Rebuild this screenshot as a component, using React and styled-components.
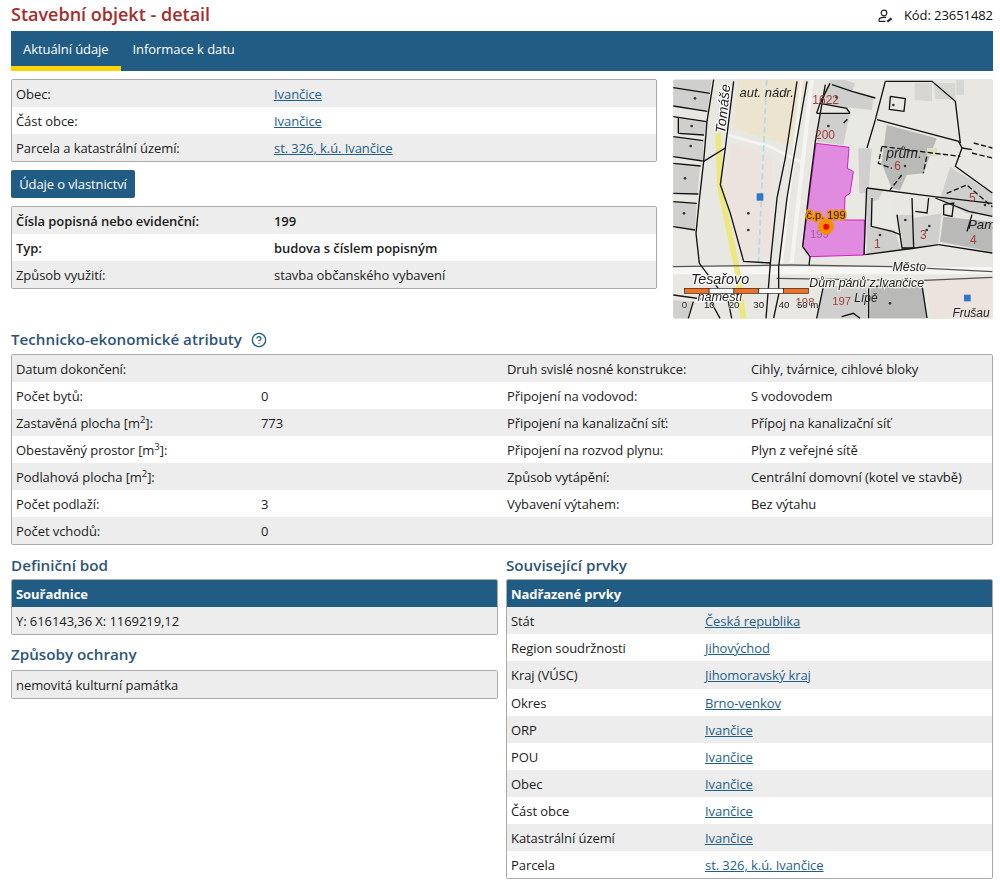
import React from 'react';
import styled, { createGlobalStyle } from 'styled-components';
import { CircleHelp } from 'lucide-react';

const NAVY = '#205c84';

const GlobalStyle = createGlobalStyle`
  html, body {
    margin: 0;
    padding: 0;
    background: #fff;
    color: #1c1c1c;
    font-family: "Open Sans", "Noto Sans", sans-serif;
    font-size: 13px;
    letter-spacing: -0.07px;
    line-height: 27px;
  }
`;

const Page = styled.div`
  padding: 0 7px 0 11px;
  width: 982px;
`;

const TitleBar = styled.header`
  display: flex;
  justify-content: space-between;
  align-items: center;
  height: 31px;
`;

const Title = styled.h1`
  margin: 0 0 2px;
  font-size: 18px;
  font-weight: 600;
  color: #a52c2c;
  line-height: 29px;
  letter-spacing: 0;
`;

const Code = styled.div`
  display: flex;
  align-items: center;
  gap: 11px;
  color: #111;
`;

const Nav = styled.nav`
  display: flex;
  height: 40px;
  background: ${NAVY};
  margin-bottom: 8px;
`;

const Tab = styled.a`
  box-sizing: border-box;
  height: 40px;
  padding: 0 12px;
  color: #fff;
  line-height: 36px;
  border-bottom: 5px solid ${(p) => (p.$active ? '#ffd200' : 'transparent')};
`;

const Top = styled.section`
  display: grid;
  grid-template-columns: 646px 320px;
  justify-content: space-between;
  height: 240px;
`;

const Panel = styled.div`
  border: 1px solid #aaa;
  border-radius: 2px;
  overflow: hidden;
`;

const Row = styled.div`
  display: grid;
  grid-template-columns: ${(p) => p.$cols};
  height: ${(p) => (p.$tall ? 28 : 27)}px;
  line-height: 29px;
  padding-left: 4px;
  background: #fff;
  white-space: nowrap;
  &:nth-child(odd) { background: #ededed; }
  font-weight: ${(p) => (p.$bold ? 600 : 400)};
`;

const HeadRow = styled.div`
  height: 27px;
  line-height: 29px;
  padding-left: 4px;
  background: ${NAVY};
  color: #fff;
  font-weight: 700;
`;

const HeadedBody = styled.div`
  ${Row}:nth-child(odd) { background: #ededed; }
  ${Row}:nth-child(even) { background: #fff; }
`;

const Link = styled.a`
  color: #1f5f8b;
  text-decoration: underline;
`;

const Sup = styled.sup`
  font-size: 9.5px;
  line-height: 0;
`;

const Button = styled.button`
  display: block;
  height: 28px;
  width: 124px;
  margin: 8px 0;
  padding: 0;
  border: 0;
  border-radius: 2px;
  background: ${NAVY};
  color: #fff;
  font: inherit;
  letter-spacing: -0.1px;
`;

const MapFrame = styled.div`
  width: 320px;
  height: 240px;
  overflow: hidden;
  border-radius: 2px;
  svg { display: block; }
`;

const Heading = styled.h2`
  box-sizing: border-box;
  display: flex;
  align-items: center;
  gap: 9px;
  margin: 0;
  height: ${(p) => p.$h || 24}px;
  padding-bottom: ${(p) => p.$pb || 5}px;
  font-size: 15.2px;
  font-weight: 600;
  letter-spacing: 0;
  color: #2d5478;
  svg { color: ${NAVY}; }
`;

const TechSection = styled.section`
  margin-top: 11px;
`;

const Columns = styled.section`
  display: grid;
  grid-template-columns: 487px 487px;
  justify-content: space-between;
  margin-top: 8px;
`;

const Column = styled.div`
  display: flex;
  flex-direction: column;
`;

const SubHeading = styled(Heading)`
  margin-top: 8px;
`;

function OwnerIcon() {
  return (
    <svg width="15" height="14" viewBox="0 0 15 14" fill="none" stroke="#222" strokeWidth="1.2">
      <circle cx="6" cy="4" r="2.8" />
      <path d="M1 12.4 V11 C1 9 3 8.4 6 8.4 H8 M1 12.4 H7.5" />
      <path d="M9.3 12.6 L13.6 9.4" strokeWidth="2" />
    </svg>
  );
}

const LIGHT_PATCHES = [
  '551,369 566,354 640,335 646,364 631,439 561,434 551,404',
  '640,600 700,600 700,685 636,680',
  '560,590 612,590 612,655 553,655',
];
const PALE_BUILDINGS = [
  '764,249 816,249 816,304 764,300',
  '821,249 886,249 886,299 826,296',
  '889,240 912,240 912,285 889,285',
];
const BUILDINGS = [
  '40,240 155,240 142,332 40,318',
  '55,350 140,365 132,405 55,400',
  '40,410 130,422 128,483 40,470',
  '40,490 120,500 112,580 40,580',
  '40,605 110,610 105,690 40,680',
  '40,900 100,905 85,955 40,955',
  '510,240 555,240 585,250 560,325 480,310',
  '570,270 640,292 636,330 560,322',
  '480,340 570,340 550,435 470,425',
  '595,445 635,445 625,580 598,580',
  '620,565 670,570 655,600 635,605 636,680 705,690 722,750 620,765',
  '715,645 760,645 760,750 730,750',
  '760,655 845,640 835,730 760,745',
  '870,500 997,580 997,650 920,640 840,600',
  '490,860 620,855 628,955 470,955',
];
const BUILDINGS_DARK = [
  '680,375 830,415 790,520 740,525 720,570 695,565 665,490',
  '850,650 997,665 997,755 840,725',
  '632,860 786,856 801,955 630,955',
];
const LINES = [
  '161,239 141,364 131,484 118,600 108,700 118,790 205,905 215,955',
  '221,244 196,444 181,554 211,640 251,784 331,789',
  '196,444 131,484',
  '40,263 150,280',
  '40,318 142,334',
  '40,350 140,365',
  '55,400 132,405',
  '55,352 55,400',
  '40,410 130,422',
  '40,470 128,483',
  '40,490 122,498',
  '40,580 115,582',
  '40,605 110,610',
  '40,680 105,690',
  '411,244 376,474 351,594 331,790 318,955',
  '496,254 466,424 446,584 428,740 450,770 447,795',
  '441,244 401,474 381,594 356,800 356,884 341,954',
  '516,254 576,274 646,294',
  '676,244 646,359 621,444',
  '651,359 896,424 906,444',
  '676,244 816,244 886,304 901,429',
  '906,444 886,499 997,579',
  '906,444 936,449',
  '510,250 480,310 470,340',
  '480,310 560,325 570,340',
  '470,340 570,340',
  '621,564 816,589 997,610',
  '620,565 612,765',
  '636,594 634,679 696,694 721,704',
  '711,644 726,744 761,744 756,594',
  '806,594 801,639 766,634',
  '826,594 926,634 997,649',
  '936,644 921,694',
  '836,734 997,759',
  '616,764 766,744 836,734',
  '851,614 881,609 876,649 851,644 851,614',
  '691,289 736,296 732,334 688,328 691,289',
  '626,859 626,955',
  '631,859 786,856 801,954',
  '490,860 470,955',
  '40,885 150,900 180,955',
  '100,905 85,955',
  '545,950 580,940 600,955',
];
const ROAD_LINES = [
  '390,795 700,800 997,815',
  '350,835 776,842 997,832',
  '40,800 390,795',
];
const DASHED = [
  '666,439 816,459 901,469',
  '666,439 655,490 695,505',
  '800,470 790,520',
  '941,429 997,444',
  '936,459 997,474',
  '860,580 920,555 997,620',
  '725,525 690,570',
  '551,369 566,354',
];
const RED_LABELS = [
  ['1622', 497, 312, 36],
  ['200', 495, 417, 36],
  ['6', 713, 510, 36],
  ['5', 937, 607, 36],
  ['4', 940, 732, 36],
  ['3', 790, 717, 36],
  ['1', 652, 745, 36],
  ['198', 435, 917, 34],
  ['197', 545, 915, 34],
];
const DOTS = [
  [105, 295], [95, 378], [92, 438], [75, 535], [72, 640], [530, 292], [505, 378],
  [735, 498], [808, 678], [736, 660], [975, 615], [660, 705], [800, 690], [700, 315],
  [690, 910], [265, 640], [265, 690],
];
const SCALE = [0, 1, 2, 3, 4];
const SCALE_TICKS = [['0', 73], ['10', 148], ['20', 222], ['30', 296], ['40', 372], ['50 m', 443]];

const ItalicLabel = styled.text`
  font-family: "Liberation Sans", sans-serif;
  font-style: italic;
  fill: #222;
  text-anchor: middle;
  stroke: ${(p) => p.$halo || 'none'};
  stroke-width: 7px;
  paint-order: stroke;
`;

const MapText = styled.text`
  font-family: "Liberation Sans", sans-serif;
  text-anchor: middle;
  letter-spacing: 0;
`;

function CadastreMap() {
  // souradnice ve 3x mrizce podle vyrezu
  return (
    <MapFrame>
      <svg width="320" height="240" viewBox="39 237 960 720" style={{ filter: 'blur(0.4px)' }}>
        <rect x="39" y="237" width="960" height="720" fill="#e8e7e1" />
        <polygon points="235,240 440,240 395,440 220,385" fill="#ece4cf" />
        <polygon points="215,430 335,470 330,770 245,770 190,560" fill="#ece2de" />
        <polygon points="800,840 997,830 997,955 810,955" fill="#ece2de" />
        <path d="M205 405 L330 440 L430 490" fill="none" stroke="#f4f4f2" strokeWidth="9" />
        <path d="M455 240 L395 790" fill="none" stroke="#f4f4f2" strokeWidth="12" />
        <path d="M425 240 L365 790" fill="none" stroke="#f4f4f2" strokeWidth="8" />
        <path d="M40 812 L997 812" fill="none" stroke="#f6f6f4" strokeWidth="22" />
        <path d="M175 400 L180 560 L230 800 L250 955" fill="none" stroke="#ece77f" strokeWidth="17" />
        <path d="M320 240 L295 800" fill="none" stroke="#b5d8e6" strokeWidth="5" strokeDasharray="18 10" />
        {LIGHT_PATCHES.map((p) => <polygon key={p} points={p} fill="#e9e9e3" />)}
        {PALE_BUILDINGS.map((p) => <polygon key={p} points={p} fill="#d6d6d3" />)}
        {BUILDINGS.map((p) => <polygon key={p} points={p} fill="#cfcfcd" />)}
        {BUILDINGS_DARK.map((p) => <polygon key={p} points={p} fill="#b9b9b7" />)}
        <rect x="801" y="444" width="30" height="24" fill="#e0dcc0" />
        <polygon
          points="468,430 567,442 562,505 580,515 570,580 555,590 553,660 613,660 613,765 450,770 428,740"
          fill="#e18be0"
          stroke="#cf22c8"
          strokeWidth="3"
        />
        {ROAD_LINES.map((p) => <polyline key={p} points={p} fill="none" stroke="#555" strokeWidth="4" />)}
        {LINES.map((p) => <polyline key={p} points={p} fill="none" stroke="#111" strokeWidth="4" />)}
        {DASHED.map((p) => <polyline key={p} points={p} fill="none" stroke="#111" strokeWidth="4" strokeDasharray="16 7" />)}
        {DOTS.map(([x, y]) => <circle key={`${x}-${y}`} cx={x} cy={y} r="4" fill="#333" />)}
        <rect x="290" y="580" width="20" height="22" fill="#2f78c4" />
        <rect x="912" y="884" width="20" height="20" fill="#2f78c4" />
        <MapText x="478" y="715" fontSize="34" fill="#a15fa0">199</MapText>
        {RED_LABELS.map(([t, x, y, s]) => (
          <MapText key={t} x={x} y={y} fontSize={s} fill="#a0403f">{t}</MapText>
        ))}
        <ItalicLabel x="320" y="290" fontSize="39">aut. nádr.</ItalicLabel>
        <ItalicLabel x="732" y="474" fontSize="42">prům.</ItalicLabel>
        <ItalicLabel x="965" y="688" fontSize="40">Pam</ItalicLabel>
        <ItalicLabel x="748" y="813" fontSize="37" $halo="#f2f2f0">Město</ItalicLabel>
        <ItalicLabel x="620" y="861" fontSize="37" $halo="#f2f2f0">Dům pánů z Ivančice</ItalicLabel>
        <ItalicLabel x="618" y="905" fontSize="36">Lípě</ItalicLabel>
        <ItalicLabel x="933" y="952" fontSize="36">Frušau</ItalicLabel>
        <ItalicLabel x="180" y="853" fontSize="43" $halo="#fff">Tesařovo</ItalicLabel>
        <ItalicLabel x="180" y="903" fontSize="38" $halo="#fff">náměstí</ItalicLabel>
        <ItalicLabel x="0" y="0" fontSize="42" $halo="#fff" transform="translate(203 328) rotate(-84)">Tomáše</ItalicLabel>
        {SCALE.map((i) => (
          <rect
            key={i}
            x={73 + i * 74.4}
            y="865"
            width="74.4"
            height="15"
            fill={i % 2 ? '#fff' : '#f5701e'}
            stroke="#222"
            strokeWidth="2"
          />
        ))}
        {SCALE_TICKS.map(([t, x]) => (
          <MapText key={t} x={x} y="924" fontSize="29" fill="#222" stroke="#e8e7e1" strokeWidth="3" paintOrder="stroke">{t}</MapText>
        ))}
        <circle cx="498" cy="680" r="24" fill="#f39200" />
        <circle cx="499" cy="680" r="9" fill="#f00" />
        <MapText x="498" y="658" fontSize="33" fill="#1a1a1a" stroke="#f39200" strokeWidth="10" paintOrder="stroke" strokeLinejoin="round">č.p. 199</MapText>
      </svg>
    </MapFrame>
  );
}

const INFO_COLS = '258px 1fr';
const TECH_COLS = '245px 246px 244px 1fr';
const REL_COLS = '194px 1fr';

const tech = [
  ['Datum dokončení:', '', 'Druh svislé nosné konstrukce:', 'Cihly, tvárnice, cihlové bloky'],
  ['Počet bytů:', '0', 'Připojení na vodovod:', 'S vodovodem'],
  [<>Zastavěná plocha [m<Sup>2</Sup>]:</>, '773', 'Připojení na kanalizační síť:', 'Přípoj na kanalizační síť'],
  [<>Obestavěný prostor [m<Sup>3</Sup>]:</>, '', 'Připojení na rozvod plynu:', 'Plyn z veřejné sítě'],
  [<>Podlahová plocha [m<Sup>2</Sup>]:</>, '', 'Způsob vytápění:', 'Centrální domovní (kotel ve stavbě)'],
  ['Počet podlaží:', '3', 'Vybavení výtahem:', 'Bez výtahu'],
  ['Počet vchodů:', '0', '', ''],
];

const related = [
  ['Stát', 'Česká republika'],
  ['Region soudržnosti', 'Jihovýchod'],
  ['Kraj (VÚSC)', 'Jihomoravský kraj', true],
  ['Okres', 'Brno-venkov'],
  ['ORP', 'Ivančice'],
  ['POU', 'Ivančice'],
  ['Obec', 'Ivančice'],
  ['Část obce', 'Ivančice'],
  ['Katastrální území', 'Ivančice'],
  ['Parcela', 'st. 326, k.ú. Ivančice'],
];

export default function App() {
  return (
    <Page>
      <GlobalStyle />
      <TitleBar>
        <Title>Stavební objekt - detail</Title>
        <Code>
          <OwnerIcon />
          <span>Kód: 23651482</span>
        </Code>
      </TitleBar>
      <Nav>
        <Tab $active>Aktuální údaje</Tab>
        <Tab>Informace k datu</Tab>
      </Nav>

      <Top>
        <div>
          <Panel>
            <Row $cols={INFO_COLS}><span>Obec:</span><span><Link>Ivančice</Link></span></Row>
            <Row $cols={INFO_COLS}><span>Část obce:</span><span><Link>Ivančice</Link></span></Row>
            <Row $cols={INFO_COLS}><span>Parcela a katastrální území:</span><span><Link>st. 326, k.ú. Ivančice</Link></span></Row>
          </Panel>
          <Button>Údaje o vlastnictví</Button>
          <Panel>
            <Row $cols={INFO_COLS} $bold><span>Čísla popisná nebo evidenční:</span><span>199</span></Row>
            <Row $cols={INFO_COLS} $bold><span>Typ:</span><span>budova s číslem popisným</span></Row>
            <Row $cols={INFO_COLS}><span>Způsob využití:</span><span>stavba občanského vybavení</span></Row>
          </Panel>
        </div>
        <CadastreMap />
      </Top>

      <TechSection>
        <Heading>
          Technicko-ekonomické atributy
          <CircleHelp size={16} />
        </Heading>
        <Panel>
          {tech.map(([a, b, c, d], i) => (
            <Row key={i} $cols={TECH_COLS}>
              <span>{a}</span><span>{b}</span><span>{c}</span><span>{d}</span>
            </Row>
          ))}
        </Panel>
      </TechSection>

      <Columns>
        <Column>
          <Heading $h={26} $pb={2}>Definiční bod</Heading>
          <Panel>
            <HeadRow>Souřadnice</HeadRow>
            <HeadedBody>
              <Row $cols="1fr"><span>Y: 616143,36 X: 1169219,12</span></Row>
            </HeadedBody>
          </Panel>
          <SubHeading $h={27} $pb={4}>Způsoby ochrany</SubHeading>
          <Panel>
            <Row $cols="1fr"><span>nemovitá kulturní památka</span></Row>
          </Panel>
        </Column>
        <Column>
          <Heading $h={26} $pb={2}>Související prvky</Heading>
          <Panel>
            <HeadRow>Nadřazené prvky</HeadRow>
            <HeadedBody>
              {related.map(([label, value, tall]) => (
                <Row key={label} $cols={REL_COLS} $tall={tall}>
                  <span>{label}</span>
                  <span><Link>{value}</Link></span>
                </Row>
              ))}
            </HeadedBody>
          </Panel>
        </Column>
      </Columns>
    </Page>
  );
}
